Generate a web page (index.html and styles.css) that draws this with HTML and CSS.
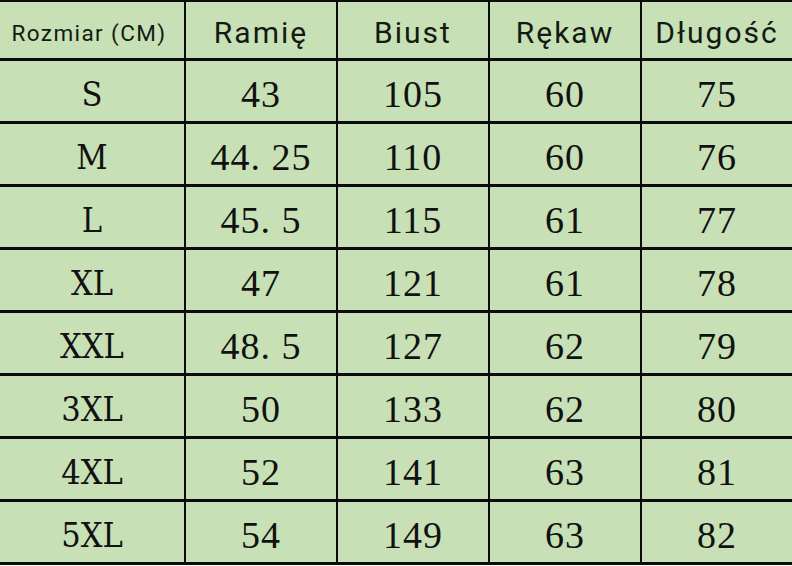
FILE: index.html
```html
<!DOCTYPE html>
<html lang="pl">
<head>
<meta charset="utf-8">
<title>Rozmiar</title>
<link rel="stylesheet" href="styles.css">
</head>
<body>
<div class="chart">
  <div class="cell head first">Rozmiar (CM)</div>
  <div class="cell head">Ramię</div>
  <div class="cell head">Biust</div>
  <div class="cell head">Rękaw</div>
  <div class="cell head">Długość</div>

  <div class="cell size">S</div><div class="cell">43</div><div class="cell">105</div><div class="cell">60</div><div class="cell">75</div>
  <div class="cell size">M</div><div class="cell">44. 25</div><div class="cell">110</div><div class="cell">60</div><div class="cell">76</div>
  <div class="cell size">L</div><div class="cell">45. 5</div><div class="cell">115</div><div class="cell">61</div><div class="cell">77</div>
  <div class="cell size">XL</div><div class="cell">47</div><div class="cell">121</div><div class="cell">61</div><div class="cell">78</div>
  <div class="cell size">XXL</div><div class="cell">48. 5</div><div class="cell">127</div><div class="cell">62</div><div class="cell">79</div>
  <div class="cell size">3XL</div><div class="cell">50</div><div class="cell">133</div><div class="cell">62</div><div class="cell">80</div>
  <div class="cell size">4XL</div><div class="cell">52</div><div class="cell">141</div><div class="cell">63</div><div class="cell">81</div>
  <div class="cell size">5XL</div><div class="cell">54</div><div class="cell">149</div><div class="cell">63</div><div class="cell">82</div>
</div>
</body>
</html>
```
FILE: styles.css
```css
html, body {
  margin: 0;
  padding: 0;
  background: #ffffff;
}
.chart {
  width: 792px;
  display: grid;
  grid-template-columns: 184px 150px 150px 150px 150px;
  grid-template-rows: 56px repeat(8, 60px);
  column-gap: 2px;
  row-gap: 3px;
  padding: 2px 0 3px;
  background: #0c0c0c;
}
.cell {
  background: #c8e0b5;
  display: flex;
  align-items: center;
  justify-content: center;
  font-family: "Liberation Serif", serif;
  font-size: 38px;
  letter-spacing: 1px;
  color: #111111;
  padding-top: 6px;
  white-space: pre;
}
.size {
  font-family: "DejaVu Serif", serif;
  font-stretch: condensed;
  font-size: 34px;
  letter-spacing: 0;
}
.head {
  font-family: Roboto, "Noto Sans", sans-serif;
  font-size: 30px;
  letter-spacing: 2px;
  padding-top: 4px;
  color: #121a12;
}
.head.first {
  font-size: 22.5px;
  letter-spacing: 1.4px;
  padding-top: 6px;
  padding-right: 6px;
}
```
